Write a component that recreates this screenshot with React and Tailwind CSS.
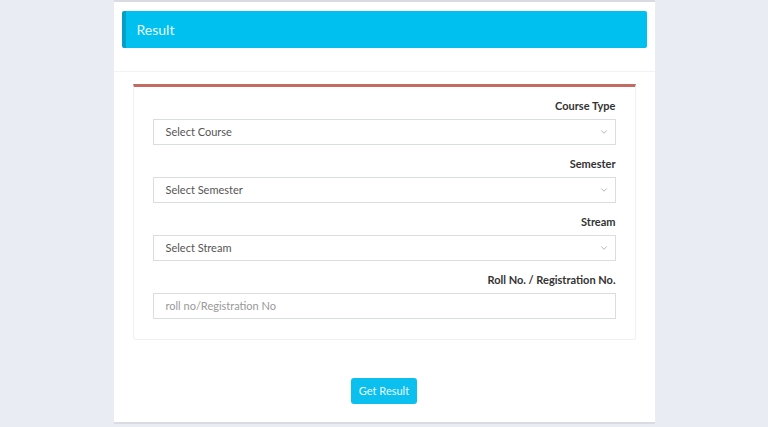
import { ChevronDown } from 'lucide-react'

const fields = [
  { label: 'Course Type', placeholder: 'Select Course', select: true },
  { label: 'Semester', placeholder: 'Select Semester', select: true },
  { label: 'Stream', placeholder: 'Select Stream', select: true },
  { label: 'Roll No. / Registration No.', placeholder: 'roll no/Registration No', select: false },
]

function Field({ label, placeholder, select }) {
  return (
    <div className="flex flex-col">
      <label className="text-right text-[11px] font-bold text-[#333] leading-[14px] mb-[6px]">{label}</label>
      <div className="h-[26px] border border-[#d9dde2] bg-white flex items-center justify-between pl-[12px] pr-[6px]">
        <span className={select ? 'text-[11px] text-[#555]' : 'text-[11px] text-[#999]'}>{placeholder}</span>
        {select && <ChevronDown size={10} strokeWidth={1.5} className="text-[#888]" />}
      </div>
    </div>
  )
}

export default function App() {
  return (
    <div className="min-h-[427px] bg-[#e9ecf2] flex justify-center" style={{ fontFamily: 'Lato, "Noto Sans", sans-serif' }}>
      <div className="w-[541px] mb-[3px] bg-white border-t-2 border-[#d8dce2] border-b-2 flex flex-col">
        <div className="px-[8px] pt-[9px] pb-[23px] border-b border-[#f1f2f4]">
          <div className="h-[37px] bg-[#00c0ef] border-l-4 border-[#00a0c8] rounded-[2px] flex items-center pl-[11px]">
            <span className="text-[14px] text-[#e6f8fd]">Result</span>
          </div>
        </div>
        <div className="px-[19px] pt-[12px]">
          <div className="border-t-[3px] border-[#c26b60] border-x border-b border-x-[#eef0f2] border-b-[#eef0f2] rounded-b-[3px] px-[19px] pt-[12px] pb-[20px] flex flex-col gap-[12px]">
            {fields.map(f => (
              <Field key={f.label} {...f} />
            ))}
          </div>
        </div>
        <div className="flex justify-center pt-[38px]">
          <button className="h-[26px] px-[8px] bg-[#0bbfee] rounded-[3px] text-[11px] text-[#eafaff]">Get Result</button>
        </div>
      </div>
    </div>
  )
}
